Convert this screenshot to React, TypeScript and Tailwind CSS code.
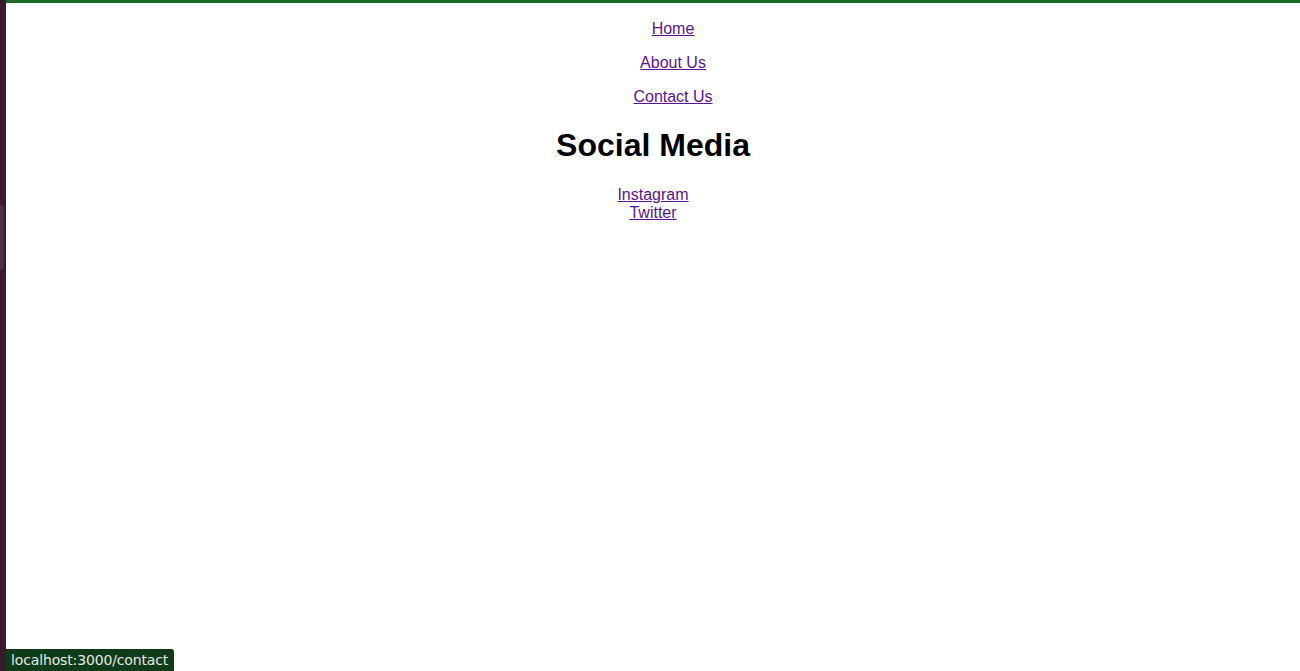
import React from 'react';

const navLinks = ['Home', 'About Us', 'Contact Us'];
const socialLinks = ['Instagram', 'Twitter'];

export default function App() {
  return (
    <div className="flex min-h-[671px] w-full bg-white font-['Liberation_Sans',Arial,sans-serif] text-black">
      {/* window edge on the left */}
      <div className="flex w-[6px] shrink-0 flex-col bg-[#3a1b2d]">
        <div className="h-[205px]" />
        <div className="h-[65px] w-[4px] rounded-r-sm bg-[#4c3044]" />
      </div>

      <div className="relative flex-1 border-t-[3px] border-[#1d6a2d]">
        <nav>
          <ul className="mt-[17px] flex flex-col gap-4 pl-10 text-center text-base leading-[18px]">
            {navLinks.map((l) => (
              <li key={l}>
                <a href="#" className="text-[#5a1490] underline">
                  {l}
                </a>
              </li>
            ))}
          </ul>
        </nav>

        <h1 className="mt-[21px] text-center text-[32px] font-bold leading-[36px]">Social Media</h1>

        <div className="mt-[23px] flex flex-col items-center text-base leading-[18px]">
          {socialLinks.map((l) => (
            <a key={l} href="#" className="text-[#5a1490] underline">
              {l}
            </a>
          ))}
        </div>

        {/* browser status bubble */}
        <div className="absolute bottom-0 left-0 flex h-[22px] w-[168px] items-center rounded-tr-[3px] bg-[#0f3c18] pl-[5px] font-['DejaVu_Sans',sans-serif] text-[14px] tracking-[-0.14px] text-[#e8e8e8]">
          localhost:3000/contact
        </div>
      </div>
    </div>
  );
}
